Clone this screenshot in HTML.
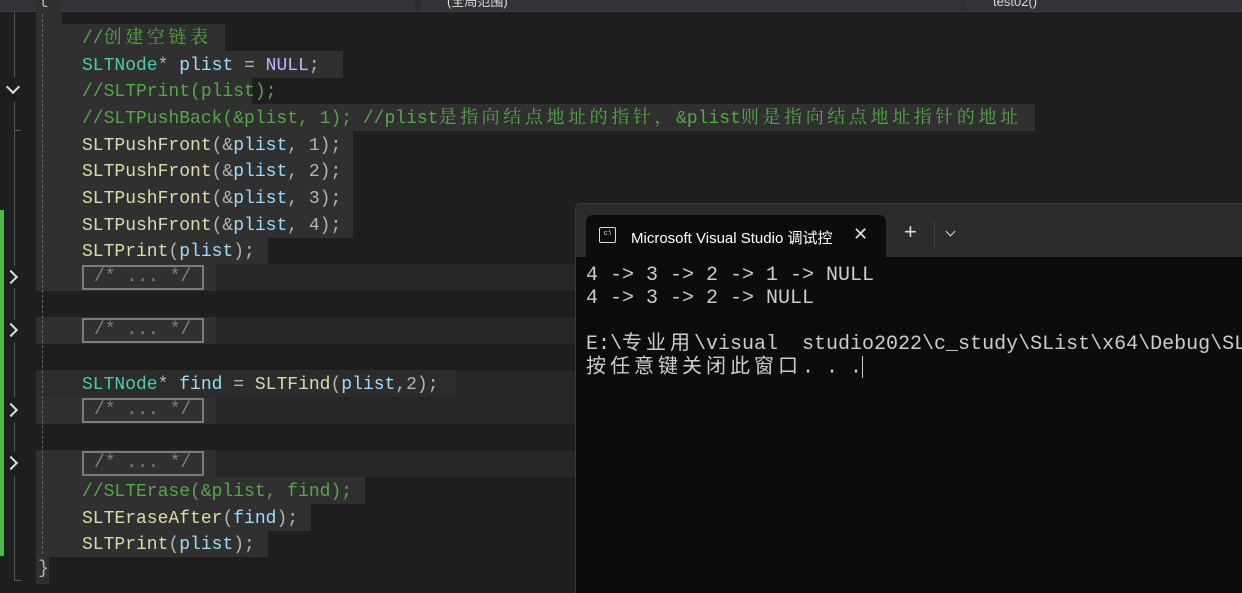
<!DOCTYPE html>
<html><head><meta charset="utf-8"><style>
*{margin:0;padding:0;box-sizing:border-box}
body{width:1242px;height:593px;overflow:hidden;background:#1e1e1e;position:relative;font-family:"Liberation Mono","Noto Sans CJK SC",monospace}
.top{position:absolute;left:0;top:0;width:1242px;height:12px;background:#2d2d30;border-bottom:1px solid #3f3f46}
.dd{position:absolute;top:0;height:11px;background:#333337;color:#ddd;font:13px "Liberation Sans","Noto Sans CJK SC",sans-serif;line-height:4px;overflow:hidden}
.hl{position:absolute;left:36px;height:27px;background:#303030}
.code{position:absolute;left:82px;font-size:18px;line-height:27px;white-space:pre;color:#b4b4b4;font-family:"Liberation Mono","Noto Serif CJK SC",monospace}
.code .z{letter-spacing:3.6px}
.c{color:#57a64a}.t{color:#4ec9b0}.v{color:#9cdcfe}.f{color:#dcdcaa}.m{color:#beb7ff}
.fold{position:absolute;left:82px;width:122px;height:25px;border:2px solid #7a7a7a;color:#808080;font-size:18px;line-height:21px;white-space:pre;padding-left:10px;font-family:"Liberation Mono",monospace}
.arr{position:absolute;left:8px;width:10px;height:10px;border-right:2px solid #ddd;border-bottom:2px solid #ddd}
.term{position:absolute;left:575px;top:203px;width:667px;height:390px;background:#0c0c0c;border-left:1px solid #3a3a3a;border-top:1px solid #3a3a3a;border-radius:6px 0 0 0;overflow:hidden}
.tbar{position:absolute;left:0;top:0;width:667px;height:53px;background:#2b2b2b}
.tab{position:absolute;left:10px;top:11px;width:300px;height:42px;background:#0c0c0c;border-radius:7px 7px 0 0;color:#fff;font:15px "Liberation Sans","Noto Sans CJK SC",sans-serif}
.tout{position:absolute;left:10px;top:60px;color:#cccccc;font-size:20px;line-height:23px;white-space:pre;font-family:"Liberation Mono","Noto Sans CJK SC",monospace}
.tout .z{letter-spacing:4px}
</style></head><body>
<div class="top">
<div class="dd" style="left:0;width:415px"></div>
<div class="dd" style="left:421px;width:540px;padding-left:26px">(全局范围)</div>
<div class="dd" style="left:965px;width:277px;padding-left:28px">test02()</div>
</div>
<div style="position:absolute;left:14px;top:12px;width:1px;height:66px;background:#555"></div>
<div style="position:absolute;left:14px;top:102px;width:1px;height:164px;background:#555"></div>
<div style="position:absolute;left:14px;top:130px;width:7px;height:1px;background:#555"></div>
<div style="position:absolute;left:14px;top:288px;width:1px;height:32px;background:#555"></div>
<div style="position:absolute;left:14px;top:342px;width:1px;height:56px;background:#555"></div>
<div style="position:absolute;left:14px;top:422px;width:1px;height:30px;background:#555"></div>
<div style="position:absolute;left:14px;top:476px;width:1px;height:104px;background:#555"></div>
<div style="position:absolute;left:14px;top:580px;width:8px;height:1px;background:#555"></div>
<div style="position:absolute;left:0;top:210px;width:4px;height:346px;background:#4db94a"></div>
<div class="arr" style="top:82px;transform:rotate(45deg)"></div>
<div class="arr" style="left:6px;top:272px;transform:rotate(-45deg)"></div>
<div class="arr" style="left:6px;top:325px;transform:rotate(-45deg)"></div>
<div class="arr" style="left:6px;top:405px;transform:rotate(-45deg)"></div>
<div class="arr" style="left:6px;top:458px;transform:rotate(-45deg)"></div>
<div style="position:absolute;left:36px;top:264px;width:540px;height:27px;background:#262626"></div>
<div style="position:absolute;left:36px;top:317px;width:540px;height:27px;background:#262626"></div>
<div style="position:absolute;left:36px;top:370px;width:540px;height:27px;background:#262626"></div>
<div style="position:absolute;left:36px;top:397px;width:540px;height:27px;background:#262626"></div>
<div style="position:absolute;left:36px;top:450px;width:540px;height:27px;background:#262626"></div>
<div class="hl" style="top:0;left:36px;width:26px;height:24px"></div>
<div class="hl" style="top:24px;width:189px"></div>
<div class="hl" style="top:51px;width:307px"></div>
<div class="hl" style="top:77px;width:216px"></div>
<div class="hl" style="top:104px;width:999px"></div>
<div class="hl" style="top:131px;width:317px"></div>
<div class="hl" style="top:157px;width:317px"></div>
<div class="hl" style="top:184px;width:317px"></div>
<div class="hl" style="top:211px;width:317px"></div>
<div class="hl" style="top:237px;width:232px"></div>
<div class="hl" style="top:264px;width:180px"></div>
<div class="hl" style="top:317px;width:180px"></div>
<div class="hl" style="top:370px;width:420px;background:#2c2c2c"></div>
<div class="hl" style="top:397px;width:180px"></div>
<div class="hl" style="top:450px;width:180px"></div>
<div class="hl" style="top:477px;width:329px"></div>
<div class="hl" style="top:504px;width:275px"></div>
<div class="hl" style="top:530px;width:232px"></div>
<div class="hl" style="top:557px;width:13px"></div>
<div style="position:absolute;left:42px;top:14px;width:0;height:540px;border-left:1px dashed #666"></div>
<div class="code" style="left:38px;top:-14px">{</div>
<div class="code" style="top:26px"><span class="c">//<span class="z">创建空链表</span></span></div>
<div class="code" style="top:53px"><span class="t">SLTNode</span>* <span class="v">plist</span> = <span class="m">NULL</span>;</div>
<div class="code" style="top:79px"><span class="c">//SLTPrint(plist);</span></div>
<div class="code" style="top:106px"><span class="c">//SLTPushBack(&amp;plist, 1); //plist<span class="z">是指向结点地址的指针，</span>&amp;plist<span class="z">则是指向结点地址指针的地址</span></span></div>
<div class="code" style="top:133px"><span class="f">SLTPushFront</span>(&amp;<span class="v">plist</span>, 1);</div>
<div class="code" style="top:159px"><span class="f">SLTPushFront</span>(&amp;<span class="v">plist</span>, 2);</div>
<div class="code" style="top:186px"><span class="f">SLTPushFront</span>(&amp;<span class="v">plist</span>, 3);</div>
<div class="code" style="top:213px"><span class="f">SLTPushFront</span>(&amp;<span class="v">plist</span>, 4);</div>
<div class="code" style="top:239px"><span class="f">SLTPrint</span>(<span class="v">plist</span>);</div>
<div class="fold" style="top:265px">/* ... */</div>
<div class="fold" style="top:318px">/* ... */</div>
<div class="code" style="top:372px"><span class="t">SLTNode</span>* <span class="v">find</span> = <span class="f">SLTFind</span>(<span class="v">plist</span>,2);</div>
<div class="fold" style="top:398px">/* ... */</div>
<div class="fold" style="top:451px">/* ... */</div>
<div class="code" style="top:479px"><span class="c">//SLTErase(&amp;plist, find);</span></div>
<div class="code" style="top:506px"><span class="f">SLTEraseAfter</span>(<span class="v">find</span>);</div>
<div class="code" style="top:532px"><span class="f">SLTPrint</span>(<span class="v">plist</span>);</div>
<div class="code" style="left:38px;top:556px">}</div>
<div class="term">
<div class="tbar">
<div class="tab">
<div style="position:absolute;left:13px;top:12px;width:17px;height:16px;border:1.5px solid #ddd;border-radius:2px;font-size:7px;line-height:12px;text-align:center;color:#ddd">c:\</div>
<div style="position:absolute;left:45px;top:12px;white-space:nowrap">Microsoft Visual Studio 调试控</div>
<div style="position:absolute;left:267px;top:9px;font-size:18px;color:#ddd">✕</div>
</div>
<div style="position:absolute;left:328px;top:15px;color:#ddd;font:22px 'Liberation Sans',sans-serif">+</div>
<div style="position:absolute;left:358px;top:18px;width:1px;height:26px;background:#444"></div>
<div style="position:absolute;left:371px;top:24px;width:7px;height:7px;border-right:1.5px solid #ddd;border-bottom:1.5px solid #ddd;transform:rotate(45deg)"></div>
</div>
<div class="tout">4 -&gt; 3 -&gt; 2 -&gt; 1 -&gt; NULL
4 -&gt; 3 -&gt; 2 -&gt; NULL

E:\<span class="z">专业用</span>\visual  studio2022\c_study\SList\x64\Debug\SList.exe
<span class="z">按任意键关闭此窗口</span>. . .<span style="display:inline-block;width:1px;height:22px;background:#ccc;vertical-align:middle"></span></div>
</div>
</body></html>
